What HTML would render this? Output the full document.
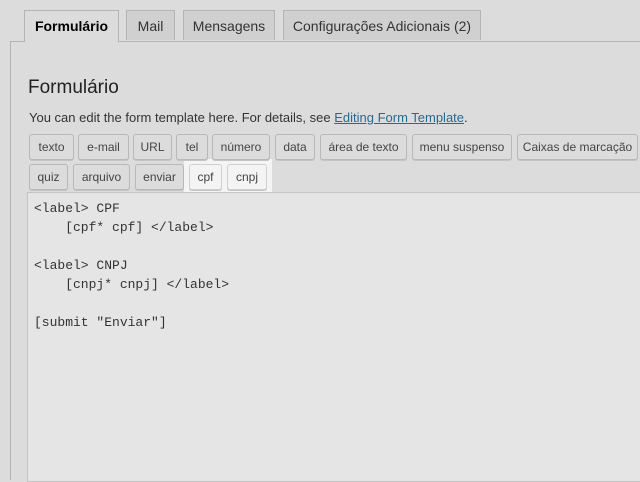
<!DOCTYPE html>
<html><head><meta charset="utf-8"><style>
body{margin:0;width:640px;height:480px;background:#dcdcdc;font-family:"Liberation Sans",sans-serif;overflow:hidden;position:relative;color:#333}
.tab{position:absolute;top:10px;height:30px;border:1px solid #b4b4b4;border-bottom:none;background:#d0d0d0;font-size:14px;line-height:30px;text-align:center;color:#333;box-sizing:border-box}
.tab.a{background:#dcdcdc;height:32px;font-weight:bold;color:#000}
.line{position:absolute;top:41px;left:10px;right:0;border-top:1px solid #b4b4b4}
.vl{position:absolute;left:10px;top:41px;bottom:0;border-left:1px solid #b4b4b4}
h2{position:absolute;left:28px;top:77px;margin:0;font-weight:normal;font-size:19px;color:#222}
.p{position:absolute;left:29px;top:110px;font-size:13px;color:#333}
.p a{color:#1e6d99;text-decoration:underline}
.b{position:absolute;height:26px;border:1px solid #b8b8b8;border-radius:3px;background:#dcdcdc;box-sizing:border-box;font-size:12px;line-height:24px;text-align:center;color:#444;box-shadow:0 1px 0 #c4c4c4}
.w{background:#f4f4f4;border-color:#d0d0d0}
.hl{position:absolute;left:184px;top:159px;width:88px;height:37px;background:#f4f4f4}
.ta{position:absolute;left:27px;top:192px;right:-2px;bottom:-2px;background:#e5e5e5;border:1px solid #c4c4c4;font-family:"Liberation Mono",monospace;font-size:13px;line-height:19px;color:#333;padding:6px 0 0 6px;white-space:pre;margin:0}
</style></head><body>
<div class="line"></div><div class="vl"></div>
<div class="tab a" style="left:24px;width:95px">Formulário</div>
<div class="tab" style="left:126px;width:49px">Mail</div>
<div class="tab" style="left:183px;width:92px">Mensagens</div>
<div class="tab" style="left:283px;width:198px">Configurações Adicionais (2)</div>
<h2>Formulário</h2>
<div class="p">You can edit the form template here. For details, see <a>Editing Form Template</a>.</div>
<div class="hl"></div>
<div class="b" style="left:29px;top:134px;width:45px">texto</div>
<div class="b" style="left:78px;top:134px;width:51px">e-mail</div>
<div class="b" style="left:133px;top:134px;width:39px">URL</div>
<div class="b" style="left:176px;top:134px;width:32px">tel</div>
<div class="b" style="left:212px;top:134px;width:58px">número</div>
<div class="b" style="left:275px;top:134px;width:40px">data</div>
<div class="b" style="left:320px;top:134px;width:87px">área de texto</div>
<div class="b" style="left:412px;top:134px;width:100px">menu suspenso</div>
<div class="b" style="left:517px;top:134px;width:121px">Caixas de marcação</div>
<div class="b" style="left:29px;top:164px;width:39px">quiz</div>
<div class="b" style="left:73px;top:164px;width:57px">arquivo</div>
<div class="b" style="left:135px;top:164px;width:49px">enviar</div>
<div class="b w" style="left:189px;top:164px;width:33px">cpf</div>
<div class="b w" style="left:227px;top:164px;width:40px">cnpj</div>
<pre class="ta">&lt;label&gt; CPF
    [cpf* cpf] &lt;/label&gt;

&lt;label&gt; CNPJ
    [cnpj* cnpj] &lt;/label&gt;

[submit "Enviar"]</pre>
</body></html>
